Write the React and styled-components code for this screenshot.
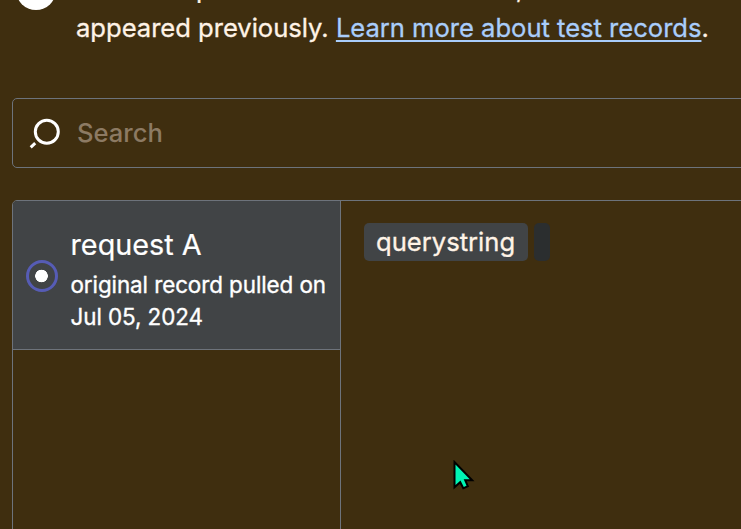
import React from 'react'
import styled, { createGlobalStyle } from 'styled-components'

export default function App() {
    return (
        <Page>
            <GlobalStyle />
            <Notice>
                <NoticeBadge />
                <NoticeText>
                    <ClippedLine>
                        <span>p</span>
                        <span>,</span>
                    </ClippedLine>
                    appeared previously. <Link>Learn more about test records</Link>.
                </NoticeText>
            </Notice>
            <SearchBox>
                <SearchIcon viewBox='0 0 32 32'>
                    <circle cx='18.8' cy='14.7' r='11.5' />
                    <path d='M7.2 26.1 L2.7 30.3' />
                </SearchIcon>
                <SearchInput placeholder='Search' />
            </SearchBox>
            <Panel>
                <RecordList>
                    <Record>
                        <Radio />
                        <div>
                            <RecordTitle>request A</RecordTitle>
                            <RecordMeta>original record pulled on<br />Jul 05, 2024</RecordMeta>
                        </div>
                    </Record>
                </RecordList>
                <Detail>
                    <Tag>querystring</Tag>
                    <EmptyTag />
                </Detail>
            </Panel>
            <Cursor viewBox='0 0 24 32'>
                <path d='M1.5 2 V27.2 L7.2 22.2 L10.3 28.3 L14.8 26.2 L12.2 20.2 H19.2 Z' />
            </Cursor>
        </Page>
    )
}

const GlobalStyle = createGlobalStyle`
    *{
        box-sizing: border-box;
    }
    body{
        margin: 0;
        overflow: hidden;
        background: #3f2e0f;
        color: #fff3e6;
        font-family: Inter, 'Liberation Sans', sans-serif;
    }
`

const Page = styled.main`
    position: relative;
    height: 529px;
    width: 741px;
    overflow: hidden;
    display: flex;
    flex-direction: column;
    padding-left: 12px;
`

const Notice = styled.section`
    display: flex;
    flex: none;
    height: 98px;
    padding-left: 4px;
`

const NoticeBadge = styled.div`
    flex: none;
    width: 40px;
    height: 40px;
    margin: -30px 20px 0 0;
    border-radius: 50%;
    background: #fff;
`

const NoticeText = styled.div`
    margin-top: -31px;
    font-size: 25.6px;
    line-height: 39px;
    letter-spacing: -0.02px;
    white-space: nowrap;
    -webkit-text-stroke: 0.3px;
`

const ClippedLine = styled.div`
    display: flex;
    gap: 304px;
    padding-left: 120px;
`

const Link = styled.a`
    color: #a9cdfb;
    text-decoration: underline;
    text-decoration-thickness: 2px;
    text-underline-offset: 3px;
    text-decoration-skip-ink: none;
`

const SearchBox = styled.label`
    display: flex;
    flex: none;
    align-items: center;
    height: 70px;
    width: 760px;
    margin-bottom: 32px;
    padding-left: 15px;
    border: 1px solid #6d737b;
    border-radius: 5px;
`

const SearchIcon = styled.svg`
    width: 32px;
    height: 32px;
    margin-right: 17px;
    fill: none;
    stroke: #fff;
    stroke-width: 3;
`

const SearchInput = styled.input`
    flex: 1;
    padding: 0 0 2px;
    border: 0;
    outline: 0;
    background: transparent;
    font: 500 25.6px Inter, sans-serif;
    &::placeholder{
        color: #8c7a63;
    }
`

const Panel = styled.section`
    display: flex;
    flex: none;
    height: 360px;
    width: 760px;
    border: 1px solid #6d737b;
    border-radius: 5px;
    overflow: hidden;
`

const RecordList = styled.div`
    flex: none;
    width: 328px;
    border-right: 1px solid #6d737b;
`

const Record = styled.div`
    display: flex;
    align-items: center;
    height: 149px;
    padding: 2px 0 0 13px;
    border-bottom: 1px solid #6d737b;
    background: #414446;
    color: #fff;
    white-space: nowrap;
`

const Radio = styled.span`
    flex: none;
    width: 32px;
    height: 32px;
    margin-right: 12.5px;
    border: 3px solid #565cb5;
    border-radius: 50%;
    background: radial-gradient(circle at 12.5px 13px, #fff 6px, transparent 6.6px);
`

const RecordTitle = styled.div`
    padding-top: 3px;
    font-size: 28.8px;
    line-height: 44px;
    -webkit-text-stroke: 0.2px;
`

const RecordMeta = styled.div`
    padding-top: 2px;
    font-size: 22.4px;
    line-height: 32px;
    letter-spacing: -0.07px;
    -webkit-text-stroke: 0.35px;
`

const Detail = styled.div`
    display: flex;
    gap: 6px;
    padding: 22px 0 0 23px;
`

const Tag = styled.span`
    height: 38px;
    padding: 0 12.5px 0 12px;
    border-radius: 5px;
    background: #414446;
    font-size: 25.6px;
    line-height: 38px;
    -webkit-text-stroke: 0.3px;
`

const EmptyTag = styled.span`
    width: 16px;
    height: 38px;
    border-radius: 5px;
    background: #2b2e2f;
`

// mouse pointer floating over the panel
const Cursor = styled.svg`
    position: absolute;
    left: 453px;
    top: 460px;
    width: 24px;
    height: 32px;
    fill: #00f5b4;
    stroke: #000;
    stroke-width: 2;
`
